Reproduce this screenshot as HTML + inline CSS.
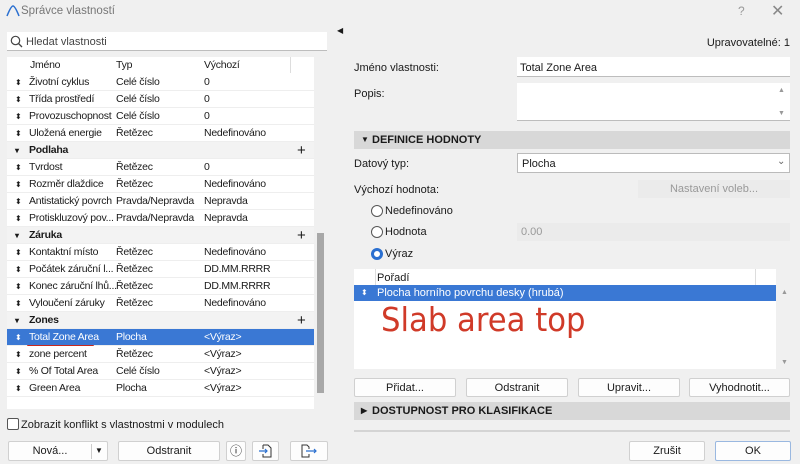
<!DOCTYPE html>
<html><head><meta charset="utf-8"><style>
*{box-sizing:border-box;margin:0;padding:0}
body{width:800px;height:464px;background:#f0f0f0;font-family:"Liberation Sans",sans-serif;font-size:11px;color:#1a1a1a;position:relative;overflow:hidden}
.a{position:absolute}
.box{position:absolute;background:#fff;border-bottom:1px solid #bdbdbd}
.btn{position:absolute;background:#fdfdfd;border:1px solid #d0d0d0;border-radius:2px;text-align:center;line-height:18px;font-size:11px}
.row{position:absolute;left:7px;width:307px;height:17px;line-height:17px;background:#fff;border-bottom:1px solid #eee;font-size:10.5px;letter-spacing:-0.25px}
.row span{position:absolute;white-space:nowrap}
.g{background:#f3f3f3;font-weight:bold}
.sel{background:#3a78d4;color:#fff}
.ar{position:absolute;left:8px;font-size:8px}
.sec{position:absolute;left:354px;width:436px;height:18px;background:#d8d8d8;font-weight:bold;line-height:18px;font-size:11px}
.rad{position:absolute;width:12px;height:12px;border:1px solid #555;border-radius:50%;background:#fff}
</style></head><body>
<svg class="a" style="left:6px;top:5px" width="14" height="12"><path d="M1 11 Q5 1 7 1 Q9 1 13 11" fill="none" stroke="#2a6fd0" stroke-width="1.5"/></svg>
<div class="a" style="left:21px;top:5px;font-size:11.5px;color:#777">Správce vlastností</div>
<div class="a" style="left:738px;top:4px;color:#999;font-size:12px">?</div>
<div class="a" style="left:771px;top:1px;color:#888;font-size:16px">✕</div>

<div class="box" style="left:7px;top:32px;width:320px;height:19px"></div>
<svg class="a" style="left:10px;top:35px" width="13" height="13"><circle cx="5.5" cy="5.5" r="4.2" fill="none" stroke="#444" stroke-width="1.2"/><path d="M8.5 8.5 L12 12" stroke="#444" stroke-width="1.3"/></svg>
<div class="a" style="left:26px;top:36px;color:#444;font-size:11px">Hledat vlastnosti</div>

<div class="a" style="left:7px;top:57px;width:307px;height:352px;background:#fff"></div>
<div class="row" style="top:57px;border:none"><span style="left:23px">Jméno</span><span style="left:109px">Typ</span><span style="left:197px">Výchozí</span></div>
<div class="a" style="left:290px;top:57px;width:1px;height:16px;background:#ddd"></div>

<div class="row" style="top:74px"><span class="ar">⬍</span><span style="left:22px">Životní cyklus</span><span style="left:109px">Celé číslo</span><span style="left:197px">0</span></div>
<div class="row" style="top:91px"><span class="ar">⬍</span><span style="left:22px">Třída prostředí</span><span style="left:109px">Celé číslo</span><span style="left:197px">0</span></div>
<div class="row" style="top:108px"><span class="ar">⬍</span><span style="left:22px">Provozuschopnost</span><span style="left:109px">Celé číslo</span><span style="left:197px">0</span></div>
<div class="row" style="top:125px"><span class="ar">⬍</span><span style="left:22px">Uložená energie</span><span style="left:109px">Řetězec</span><span style="left:197px">Nedefinováno</span></div>
<div class="row g" style="top:142px"><span class="ar">▾</span><span style="left:22px">Podlaha</span><span style="left:290px;font-weight:normal;font-size:15px">+</span></div>
<div class="row" style="top:159px"><span class="ar">⬍</span><span style="left:22px">Tvrdost</span><span style="left:109px">Řetězec</span><span style="left:197px">0</span></div>
<div class="row" style="top:176px"><span class="ar">⬍</span><span style="left:22px">Rozměr dlaždice</span><span style="left:109px">Řetězec</span><span style="left:197px">Nedefinováno</span></div>
<div class="row" style="top:193px"><span class="ar">⬍</span><span style="left:22px">Antistatický povrch</span><span style="left:109px">Pravda/Nepravda</span><span style="left:197px">Nepravda</span></div>
<div class="row" style="top:210px"><span class="ar">⬍</span><span style="left:22px">Protiskluzový pov...</span><span style="left:109px">Pravda/Nepravda</span><span style="left:197px">Nepravda</span></div>
<div class="row g" style="top:227px"><span class="ar">▾</span><span style="left:22px">Záruka</span><span style="left:290px;font-weight:normal;font-size:15px">+</span></div>
<div class="row" style="top:244px"><span class="ar">⬍</span><span style="left:22px">Kontaktní místo</span><span style="left:109px">Řetězec</span><span style="left:197px">Nedefinováno</span></div>
<div class="row" style="top:261px"><span class="ar">⬍</span><span style="left:22px">Počátek záruční l...</span><span style="left:109px">Řetězec</span><span style="left:197px">DD.MM.RRRR</span></div>
<div class="row" style="top:278px"><span class="ar">⬍</span><span style="left:22px">Konec záruční lhů...</span><span style="left:109px">Řetězec</span><span style="left:197px">DD.MM.RRRR</span></div>
<div class="row" style="top:295px"><span class="ar">⬍</span><span style="left:22px">Vyloučení záruky</span><span style="left:109px">Řetězec</span><span style="left:197px">Nedefinováno</span></div>
<div class="row g" style="top:312px"><span class="ar">▾</span><span style="left:22px">Zones</span><span style="left:290px;font-weight:normal;font-size:15px">+</span></div>
<div class="row sel" style="top:329px"><span class="ar">⬍</span><span style="left:22px">Total Zone Area</span><span style="left:109px">Plocha</span><span style="left:197px">&lt;Výraz&gt;</span></div>
<div class="a" style="left:27px;top:345px;width:67px;height:2px;background:#c8281e;border-radius:1px"></div>
<div class="row" style="top:346px"><span class="ar">⬍</span><span style="left:22px">zone percent</span><span style="left:109px">Řetězec</span><span style="left:197px">&lt;Výraz&gt;</span></div>
<div class="row" style="top:363px"><span class="ar">⬍</span><span style="left:22px">% Of Total Area</span><span style="left:109px">Celé číslo</span><span style="left:197px">&lt;Výraz&gt;</span></div>
<div class="row" style="top:380px"><span class="ar">⬍</span><span style="left:22px">Green Area</span><span style="left:109px">Plocha</span><span style="left:197px">&lt;Výraz&gt;</span></div>
<div class="a" style="left:317px;top:233px;width:7px;height:160px;background:#a8a8a8"></div>

<div class="a" style="left:7px;top:418px;width:12px;height:12px;border:1px solid #555;border-radius:2px;background:#fff"></div>
<div class="a" style="left:21px;top:419px">Zobrazit konflikt s vlastnostmi v modulech</div>
<div class="btn" style="left:8px;top:441px;width:100px;height:20px"><span style="position:absolute;left:0;width:82px">Nová...</span><span style="position:absolute;left:82px;top:2px;width:1px;height:15px;background:#ccc"></span><span style="position:absolute;left:86px;font-size:8px">▼</span></div>
<div class="btn" style="left:118px;top:441px;width:102px;height:20px">Odstranit</div>
<div class="btn" style="left:226px;top:441px;width:20px;height:20px;font-size:12px">ⓘ</div>
<div class="btn" style="left:252px;top:441px;width:27px;height:20px"></div>
<svg class="a" style="left:258px;top:444px" width="16" height="14"><path d="M5 1 H10 L13 4 V13 H5 V10 M5 5 V1" fill="none" stroke="#333"/><path d="M1 7 H9 M7 5 L9 7 L7 9" fill="none" stroke="#2a6fd0" stroke-width="1.2"/></svg>
<div class="btn" style="left:290px;top:441px;width:38px;height:20px"></div>
<svg class="a" style="left:300px;top:444px" width="18" height="14"><path d="M9 10 V13 H2 V1 H7 L9 3 V5" fill="none" stroke="#333"/><path d="M6 7 H16 M14 5 L16 7 L14 9" fill="none" stroke="#2a6fd0" stroke-width="1.2"/></svg>

<div class="a" style="left:337px;top:26px;font-size:8px">◀</div>

<div class="a" style="right:10px;top:37px">Upravovatelné: 1</div>
<div class="a" style="left:354px;top:62px">Jméno vlastnosti:</div>
<div class="box" style="left:517px;top:57px;width:273px;height:20px"></div>
<div class="a" style="left:520px;top:62px">Total Zone Area</div>
<div class="a" style="left:354px;top:88px">Popis:</div>
<div class="box" style="left:517px;top:83px;width:273px;height:38px"></div>
<div class="a" style="left:778px;top:87px;font-size:7px;color:#999">▲</div>
<div class="a" style="left:778px;top:110px;font-size:7px;color:#999">▼</div>

<div class="sec" style="top:131px"><span style="position:absolute;left:7px;font-size:8px">▼</span><span style="position:absolute;left:18px">DEFINICE HODNOTY</span></div>
<div class="a" style="left:354px;top:158px">Datový typ:</div>
<div class="a" style="left:517px;top:153px;width:273px;height:20px;background:#fff;border:1px solid #bbb"></div>
<div class="a" style="left:522px;top:158px">Plocha</div>
<div class="a" style="left:777px;top:156px;color:#666;font-size:10px">⌄</div>
<div class="a" style="left:354px;top:184px">Výchozí hodnota:</div>
<div class="a" style="left:638px;top:180px;width:152px;height:18px;background:#ebebeb;color:#999;text-align:center;line-height:18px">Nastavení voleb...</div>
<div class="rad" style="left:371px;top:205px"></div><div class="a" style="left:385px;top:205px">Nedefinováno</div>
<div class="rad" style="left:371px;top:226px"></div><div class="a" style="left:385px;top:226px">Hodnota</div>
<div class="a" style="left:517px;top:223px;width:273px;height:18px;background:#ebebeb;color:#999;line-height:18px;padding-left:4px">0.00</div>
<div class="rad" style="left:371px;top:248px;border:3px solid #2a6fd0"></div><div class="a" style="left:385px;top:248px">Výraz</div>

<div class="a" style="left:354px;top:269px;width:422px;height:100px;background:#fff"></div>
<div class="a" style="left:375px;top:269px;width:1px;height:16px;background:#ddd"></div>
<div class="a" style="left:755px;top:269px;width:1px;height:16px;background:#ddd"></div>
<div class="a" style="left:377px;top:272px">Pořadí</div>
<div class="a sel" style="left:354px;top:285px;width:422px;height:16px;line-height:16px"><span style="position:absolute;left:7px;font-size:8px">⬍</span><span style="position:absolute;left:23px">Plocha horního povrchu desky (hrubá)</span></div>
<div class="a" style="left:781px;top:289px;font-size:7px;color:#999">▲</div>
<div class="a" style="left:781px;top:359px;font-size:7px;color:#999">▼</div>
<div class="a" style="left:381px;top:300px;font-family:'DejaVu Sans',sans-serif;font-size:33px;color:#d03a28;letter-spacing:0px;transform:scaleX(0.93);transform-origin:left">Slab area top</div>

<div class="btn" style="left:354px;top:378px;width:102px;height:19px">Přidat...</div>
<div class="btn" style="left:466px;top:378px;width:102px;height:19px">Odstranit</div>
<div class="btn" style="left:578px;top:378px;width:102px;height:19px">Upravit...</div>
<div class="btn" style="left:689px;top:378px;width:101px;height:19px">Vyhodnotit...</div>
<div class="sec" style="top:402px"><span style="position:absolute;left:7px;font-size:8px">▶</span><span style="position:absolute;left:18px">DOSTUPNOST PRO KLASIFIKACE</span></div>
<div class="a" style="left:354px;top:430px;width:436px;height:2px;background:#d4d4d4"></div>
<div class="btn" style="left:629px;top:441px;width:76px;height:20px">Zrušit</div>
<div class="btn" style="left:715px;top:441px;width:76px;height:20px;border-color:#9ab8e0">OK</div>
</body></html>
